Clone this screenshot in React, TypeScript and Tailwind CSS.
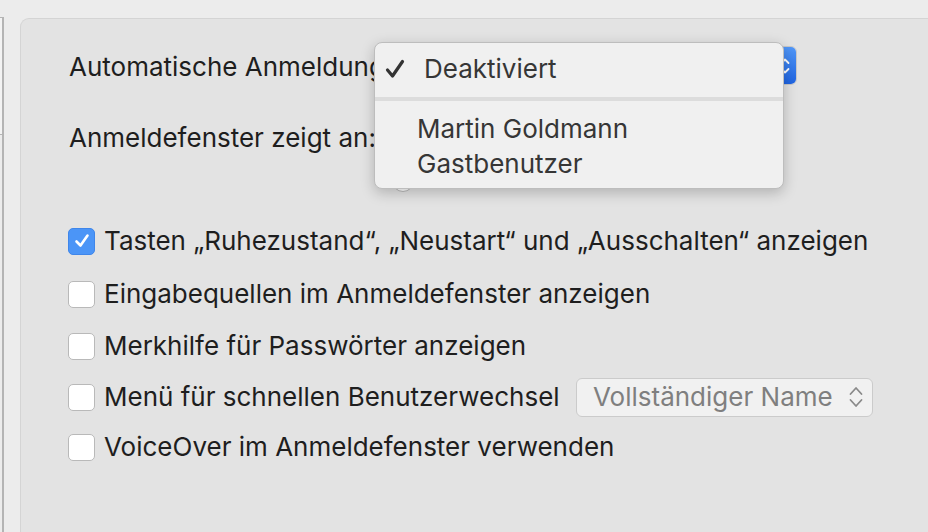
import React from "react";

const font = { fontFamily: "Inter, 'Noto Sans', sans-serif" };

function Checkbox({ checked }: { checked?: boolean }) {
  if (checked) {
    return (
      <div className="w-[27px] h-[27px] rounded-[5px] bg-[#4b95f7] border border-[#3f86ea] flex items-center justify-center shrink-0">
        <svg width="18" height="18" viewBox="0 0 18 18">
          <path d="M3.5 9.5 L7.5 13.5 L14.5 3.5" fill="none" stroke="#fff" strokeWidth="2.6" strokeLinecap="round" strokeLinejoin="round" />
        </svg>
      </div>
    );
  }
  return <div className="w-[27px] h-[27px] rounded-[5px] bg-white border border-[#b9b9b9] shrink-0" />;
}

function Row({ checked, label, children, mt }: { checked?: boolean; label: string; children?: React.ReactNode; mt: string }) {
  return (
    <div className={`flex items-center h-[28px] ${mt}`}>
      <div className="ml-[47px]">
        <Checkbox checked={checked} />
      </div>
      <span className="ml-[9px] text-[26px] text-[#1e1e1e] whitespace-nowrap leading-none">{label}</span>
      {children}
    </div>
  );
}

export default function App() {
  return (
    <div className="w-[928px] h-[532px] bg-[#ececec] flex overflow-hidden" style={font}>
      {/* left strip */}
      <div className="w-[20px] shrink-0 flex flex-col pt-[17px]">
        <div className="w-[4px] h-[118px] bg-[#f3f3f3] border-t border-r-2 border-b border-[#b4b4b4]" />
        <div className="w-[4px] flex-1 border-r-2 border-[#b4b4b4]" />
      </div>
      {/* panel */}
      <div className="relative mt-[18px] flex-1 rounded-tl-[9px] bg-[#e3e3e3] border-t border-l border-[#d4d4d4] flex flex-col">
        {/* row 1 */}
        <div className="flex items-center h-[39px] mt-[27px]">
          <div className="ml-[48px] w-[315px] pt-[3px] text-[26px] text-[#1e1e1e] whitespace-nowrap leading-none">Automatische Anmeldung</div>
          <div className="w-[413px] h-[39px] rounded-[6px] bg-[#f5f5f5] border border-[#c8c8c8] flex justify-end">
            <div className="w-[22px] h-full rounded-r-[5px] bg-gradient-to-b from-[#5197f8] to-[#1f64e2] flex items-center justify-center">
              <svg width="12" height="24" viewBox="0 0 12 24">
                <path d="M2.5 9 L6 5.5 L9.5 9 M2.5 15 L6 18.5 L9.5 15" fill="none" stroke="#fff" strokeWidth="1.8" strokeLinecap="round" strokeLinejoin="round" />
              </svg>
            </div>
          </div>
        </div>
        {/* row 2 */}
        <div className="flex items-center h-[36px] mt-[34px]">
          <div className="ml-[48px] w-[323px] pt-[1px] text-[26px] text-[#1e1e1e] whitespace-nowrap leading-none">Anmeldefenster zeigt an:</div>
          <div className="w-[22px] h-[22px] rounded-full bg-white border border-[#b9b9b9]" />
        </div>
        {/* row 3 radio */}
        <div className="flex items-center h-[22px] mt-[15px]">
          <div className="ml-[371px] w-[22px] h-[22px] rounded-full bg-white border border-[#b9b9b9]" />
        </div>

        <Row checked mt="mt-[35px]" label="Tasten „Ruhezustand“, „Neustart“ und „Ausschalten“ anzeigen" />
        <Row mt="mt-[25px]" label="Eingabequellen im Anmeldefenster anzeigen" />
        <Row mt="mt-[24px]" label="Merkhilfe für Passwörter anzeigen" />
        <Row mt="mt-[23px]" label="Menü für schnellen Benutzerwechsel">
          <div className="absolute left-[555px] w-[297px] h-[39px] rounded-[6px] bg-[#f1f1f1] border border-[#cbcbcb] flex items-center justify-between pl-[16px] pr-[8px]">
            <span className="text-[26px] text-[#7f7f7f] leading-none whitespace-nowrap">Vollständiger Name</span>
            <svg width="16" height="26" viewBox="0 0 16 26">
              <path d="M2.5 10 L8 4 L13.5 10 M2.5 16 L8 22 L13.5 16" fill="none" stroke="#8a8a8a" strokeWidth="1.8" strokeLinecap="round" strokeLinejoin="round" />
            </svg>
          </div>
        </Row>
        <Row mt="mt-[22px]" label="VoiceOver im Anmeldefenster verwenden" />

        {/* dropdown menu */}
        <div className="absolute left-[353px] top-[23px] w-[410px] h-[147px] rounded-[8px] bg-[#f0f0f0] border border-[#bdbdbd] shadow-[0_4px_14px_rgba(0,0,0,0.22)] flex flex-col pt-[8px]">
          <div className="h-[36px] flex items-center">
            <svg className="ml-[10px]" width="20" height="20" viewBox="0 0 20 20">
              <path d="M2.5 11 L7.5 17 L17.5 2.5" fill="none" stroke="#333" strokeWidth="3.2" strokeLinecap="round" strokeLinejoin="round" />
            </svg>
            <span className="ml-[19px] text-[26px] text-[#363636] leading-none">Deaktiviert</span>
          </div>
          <div className="mt-[10px] h-[4px] bg-[#dcdcdc]" />
          <div className="mt-[10px] h-[35px] flex items-center pl-[42px] text-[26px] text-[#363636] leading-none">Martin Goldmann</div>
          <div className="h-[35px] flex items-center pl-[42px] text-[26px] text-[#363636] leading-none">Gastbenutzer</div>
        </div>
      </div>
    </div>
  );
}
